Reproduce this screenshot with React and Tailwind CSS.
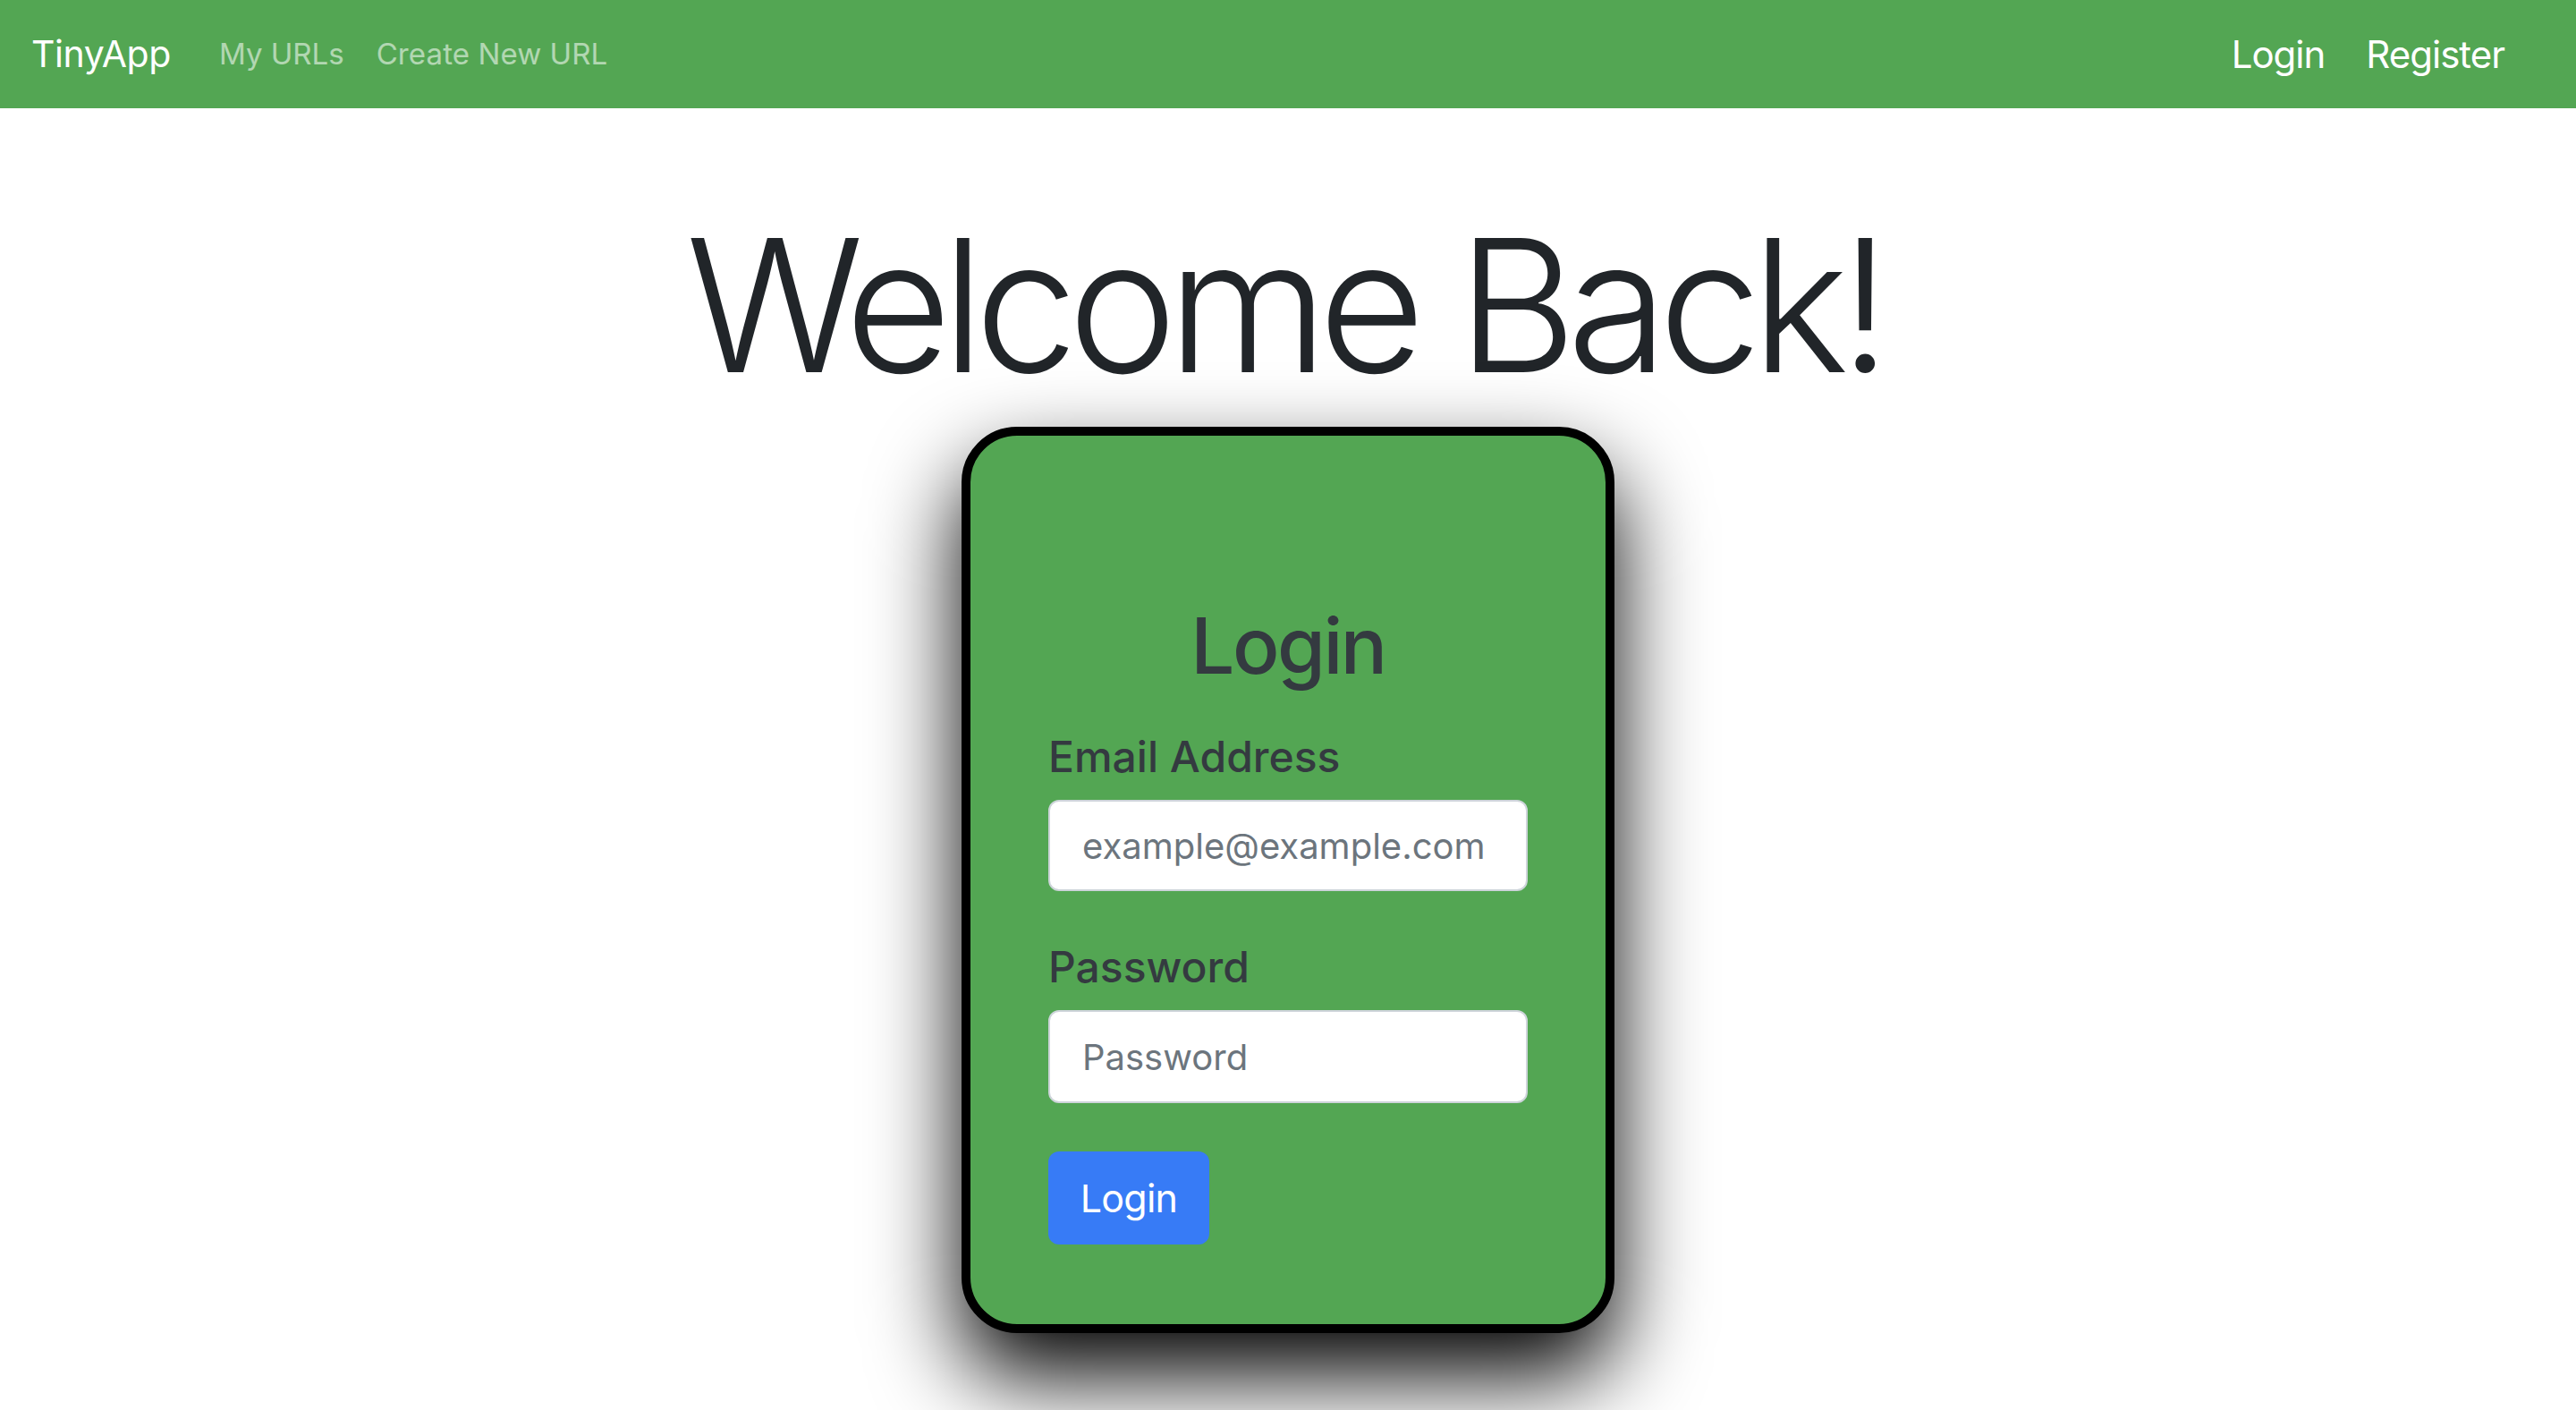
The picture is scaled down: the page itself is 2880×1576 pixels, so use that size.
import React from "react";

function NavBar() {
  return (
    <nav className="h-[121px] w-full bg-[#53a653] flex items-center justify-between pl-[35px] pr-[80px]">
      <div className="flex items-center">
        <a href="#" className="text-[41px] tracking-[-0.4px] text-white mr-[54px]">TinyApp</a>
        <a href="#" className="text-[33px] text-white/55 mr-[36px]">My URLs</a>
        <a href="#" className="text-[33px] tracking-[0.1px] text-white/55">Create New URL</a>
      </div>
      <div className="flex items-center gap-[46px]">
        <a href="#" className="text-[42px] tracking-[-1px] text-white">Login</a>
        <a href="#" className="text-[42px] tracking-[-1px] text-white">Register</a>
      </div>
    </nav>
  );
}

function LoginCard() {
  return (
    <div className="w-[730px] border-[10px] border-black rounded-[62px] bg-[#53a653] shadow-[0_48px_100px_rgba(0,0,0,1)] pt-[191px] pb-[89px] px-[87px]">
      <h2 className="text-center text-[87px] leading-none font-medium tracking-[-2.5px] text-[#343a40]">Login</h2>
      <form className="mt-[52px] flex flex-col">
        <label className="text-[48px] leading-[58px] font-medium text-[#343a40] mb-[19px]">Email Address</label>
        <input
          type="email"
          placeholder="example@example.com"
          className="h-[102px] w-full bg-white border-2 border-[#ced4da] rounded-[12px] px-[36px] text-[40px] text-[#212529] placeholder:text-[#6c757d] outline-none"
        />
        <label className="mt-[56px] text-[48px] leading-[58px] font-medium text-[#343a40] mb-[19px]">Password</label>
        <input
          type="password"
          placeholder="Password"
          className="h-[104px] w-full bg-white border-2 border-[#ced4da] rounded-[12px] px-[36px] text-[40px] text-[#212529] placeholder:text-[#6c757d] outline-none"
        />
        <div className="mt-[54px]">
          <button type="button" className="h-[104px] w-[180px] rounded-[12px] bg-[#377bf6] text-white text-[43px] tracking-[-0.8px]">
            Login
          </button>
        </div>
      </form>
    </div>
  );
}

export default function App() {
  return (
    <div className="min-h-[1576px] bg-white font-['Inter',sans-serif] overflow-hidden">
      <NavBar />
      <main className="flex flex-col items-center">
        <h1 className="mt-[117px] mr-[10px] text-[206px] leading-none font-light text-[#212529] tracking-[-11px]">Welcome Back!</h1>
        <div className="mt-[33px]">
          <LoginCard />
        </div>
      </main>
    </div>
  );
}
